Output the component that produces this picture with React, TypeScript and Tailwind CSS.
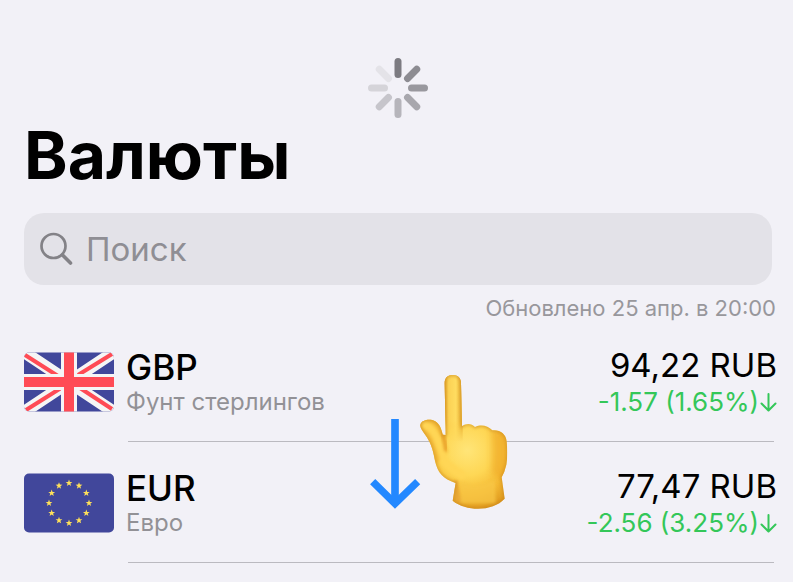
type Currency = {
  code: string;
  name: string;
  rate: string;
  change: string;
  flag: () => React.JSX.Element;
};

const SPOKES = ['#7c7b81', '#8d8c92', '#99989e', '#a8a7ad', '#b6b5bb', '#c6c5cb', '#d5d4d9', '#e4e3e8'];

const STARS = Array.from({ length: 12 }, (_, i) => {
  const a = (i * Math.PI) / 6;
  return { x: 45 + 20 * Math.sin(a), y: 30 - 20 * Math.cos(a) };
});

function Spinner() {
  return (
    <svg className="size-[60px]" viewBox="0 0 60 60" role="img" aria-label="Загрузка">
      {SPOKES.map((color, i) => (
        <rect key={color} x="26.5" y="0" width="7" height="20" rx="3.5" fill={color} transform={`rotate(${i * 45} 30 30)`} />
      ))}
    </svg>
  );
}

function FlagGB() {
  return (
    <svg className="h-[60px] w-[90px]" viewBox="0 0 90 60" aria-hidden="true">
      <clipPath id="gb">
        <rect y="0.5" width="90" height="59" rx="5" />
      </clipPath>
      <g clipPath="url(#gb)">
        <rect width="90" height="60" fill="#41479b" />
        <path d="M0 0 90 60M90 0 0 60" stroke="#f5f5f5" strokeWidth="12" />
        <path d="M1 3 34 24M88 2 54 23M2 58 37 36M88 57 56 36" stroke="#ff4b55" strokeWidth="4" />
        <path d="M45 0V60M0 30H90" stroke="#f5f5f5" strokeWidth="16" />
        <path d="M45 0V60M0 30H90" stroke="#ff4b55" strokeWidth="10" />
      </g>
    </svg>
  );
}

function FlagEU() {
  return (
    <svg className="h-[60px] w-[90px]" viewBox="0 0 90 60" aria-hidden="true">
      <rect y="0.5" width="90" height="59" rx="5" fill="#41479b" />
      {STARS.map((s, i) => (
        <path
          key={i}
          d="M0-3.5.9-1.1 3.4-1 1.4.5 2.1 3 0 1.6-2.1 3-1.4.5-3.4-1-.9-1.1Z"
          fill="#ffe15a"
          transform={`translate(${s.x} ${s.y})`}
        />
      ))}
    </svg>
  );
}

function PullGesture() {
  return (
    <svg
      className="pointer-events-none absolute top-[44px] left-1/2 -ml-[37px] h-[155px] w-[160px]"
      viewBox="0 0 480 465"
      aria-hidden="true"
    >
      <defs>
        <radialGradient id="palm" gradientUnits="userSpaceOnUse" cx="322" cy="256" r="190">
          <stop offset="0" stopColor="#ffe578" />
          <stop offset="0.4" stopColor="#fed755" />
          <stop offset="0.7" stopColor="#f5bb35" />
          <stop offset="1" stopColor="#dc951d" />
        </radialGradient>
        <linearGradient id="finger" gradientUnits="userSpaceOnUse" x1="253" y1="0" x2="306" y2="0">
          <stop offset="0" stopColor="#e5a529" />
          <stop offset="0.22" stopColor="#fbd154" />
          <stop offset="0.65" stopColor="#ffdc60" />
          <stop offset="1" stopColor="#e7ad32" />
        </linearGradient>
        <linearGradient id="fade" gradientUnits="userSpaceOnUse" x1="0" y1="165" x2="0" y2="230">
          <stop offset="0" stopColor="#fff" />
          <stop offset="1" stopColor="#000" />
        </linearGradient>
        <mask id="fingerMask" maskUnits="userSpaceOnUse" x="240" y="20" width="80" height="220">
          <rect x="240" y="20" width="80" height="220" fill="url(#fade)" />
        </mask>
        <clipPath id="handClip">
          <path d="M254 55C254 38 263 30 278 30S303 38 303 55L306 184C318 174 334 174 345 186C364 177 383 182 397 196C421 194 438 207 440 230Q444 270 439 299Q434 321 425 337L434 401C399 439 321 441 278 407L287 354C248 341 233 323 225 287C218 249 211 231 196 210C187 198 179 187 181 179C185 164 211 161 224 168C238 175 244 190 248 209L257 210Z" />
        </clipPath>
        <filter id="soft" x="-20%" y="-20%" width="140%" height="140%">
          <feGaussianBlur stdDeviation="5" />
        </filter>
        <filter id="shade" filterUnits="userSpaceOnUse" x="170" y="20" width="290" height="430">
          <feGaussianBlur stdDeviation="10" />
        </filter>
      </defs>
      <path d="M105 162V418" stroke="#2388ff" strokeWidth="23" />
      <path d="M38 350 105 416 173 350" fill="none" stroke="#2388ff" strokeWidth="22" />
      <g clipPath="url(#handClip)">
        <rect x="175" y="25" width="275" height="412" fill="url(#palm)" />
        <path d="M175 155H240L264 260 225 300Z" fill="#f5bd3d" filter="url(#soft)" />
        <path d="M195 180Q220 190 233 225L256 292 305 330" fill="none" stroke="#ffd654" strokeWidth="24" strokeLinecap="round" filter="url(#soft)" />
        <path d="M246 204Q257 228 258 258" fill="none" stroke="#eaa32a" strokeWidth="11" filter="url(#soft)" />
        <rect x="250" y="25" width="58" height="215" fill="url(#finger)" mask="url(#fingerMask)" />
        <path d="M272 354 291 344 308 415 282 414Z" fill="#e9a936" filter="url(#soft)" />
        <path d="M300 350Q350 378 405 343L407 415H302Z" fill="#f8c746" opacity="0.7" filter="url(#soft)" />
        <path d="M396 195 445 190V340L420 345 396 325Z" fill="#efa928" opacity="0.65" filter="url(#shade)" />
        <path
          d="M254 55C254 38 263 30 278 30S303 38 303 55L306 184C318 174 334 174 345 186C364 177 383 182 397 196C421 194 438 207 440 230Q444 270 439 299Q434 321 425 337L434 401C399 439 321 441 278 407L287 354C248 341 233 323 225 287C218 249 211 231 196 210C187 198 179 187 181 179C185 164 211 161 224 168C238 175 244 190 248 209L257 210Z"
          fill="none"
          stroke="#c58218"
          strokeWidth="6"
          opacity="0.7"
          filter="url(#soft)"
        />
      </g>
    </svg>
  );
}

const CURRENCIES: Currency[] = [
  { code: 'GBP', name: 'Фунт стерлингов', rate: '94,22 RUB', change: '-1.57 (1.65%)', flag: FlagGB },
  { code: 'EUR', name: 'Евро', rate: '77,47 RUB', change: '-2.56 (3.25%)', flag: FlagEU },
];

function CurrencyRow({ code, name, rate, change, flag: Flag }: Currency) {
  return (
    <li className="flex h-[121px] gap-3">
      <div className="pt-[31px]">
        <Flag />
      </div>
      <div className="relative flex flex-1 justify-between pt-[23px] after:absolute after:right-[3px] after:bottom-0 after:left-[2px] after:h-px after:bg-[#bbbac0]">
        <div>
          <div className="text-[35px] leading-[46px] font-medium">{code}</div>
          <div className="text-[24px] leading-6 text-[#929196]">{name}</div>
        </div>
        <div className="text-right">
          <div className="text-[33px] leading-[42px]">{rate}</div>
          <div className="flex items-center justify-end text-[26px] leading-8 text-[#34c759]">
            {change}
            <svg className="ml-px h-5 w-[17px]" viewBox="0 0 17 20" fill="none" stroke="currentColor" strokeWidth="2" strokeLinecap="round" strokeLinejoin="round" aria-label="вниз" role="img">
              <path d="M8.500 2V18M1.500 11.500 8.500 18.500 15.500 11.500" />
            </svg>
          </div>
        </div>
      </div>
    </li>
  );
}

export default function App() {
  return (
    <main className="min-h-screen bg-[#f2f1f7] pt-[58px] font-['Inter','Liberation_Sans',sans-serif] text-black">
      <div className="flex justify-center pl-[3px]">
        <Spinner />
      </div>
      <h1 className="px-6 text-[66px] leading-[74px] font-bold">Валюты</h1>
      <label className="mt-[21px] mr-[21px] ml-6 flex h-[72px] items-center rounded-[20px] bg-[#e3e2e8] pl-[15px]">
        <svg className="size-[35px] shrink-0" viewBox="0 0 35 35" fill="none" stroke="#838287" aria-hidden="true">
          <circle cx="14.500" cy="14" r="12" strokeWidth="2.700" />
          <path d="m23.500 23 8 8" strokeWidth="3.600" strokeLinecap="round" />
        </svg>
        <input
          type="search"
          aria-label="Поиск"
          placeholder="Поиск"
          className="ml-3 min-w-0 flex-1 bg-transparent text-[33px] leading-[42px] outline-none placeholder:text-[#8f8e94]"
        />
      </label>
      <p className="mt-[7px] pr-[17px] text-right text-[22px] leading-8 text-[#98979c]">Обновлено 25 апр. в 20:00</p>
      <div className="relative -mt-[3px]">
        <ul className="pr-4 pl-6">
          {CURRENCIES.map((c) => (
            <CurrencyRow key={c.code} {...c} />
          ))}
        </ul>
        <PullGesture />
      </div>
    </main>
  );
}
